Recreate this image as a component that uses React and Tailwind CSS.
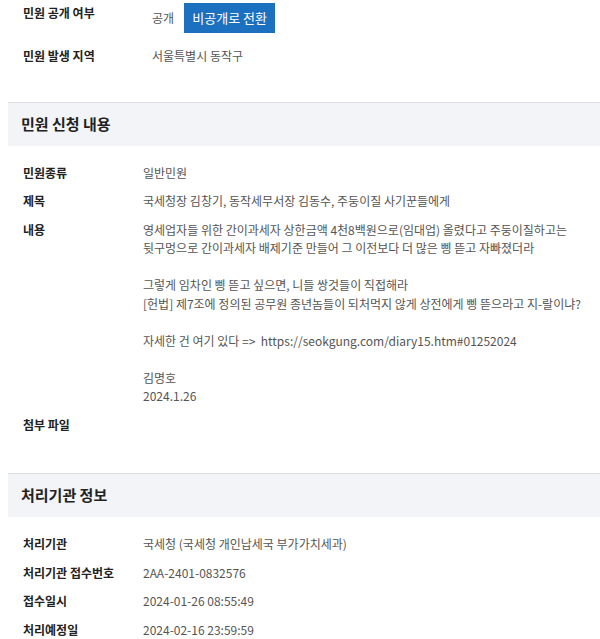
const Row = ({ label, children, className = "", labelW = "w-[120px]" }) => (
  <div className={`flex py-[5px] leading-[18.5px] ${className}`}>
    <div className={`${labelW} shrink-0 font-bold text-[#222]`}>{label}</div>
    <div className="flex-1 text-[#555]">{children}</div>
  </div>
);

const SectionHeader = ({ title }) => (
  <div className="border-t border-[#dcdee3] bg-[#f3f4f7] h-[44px] flex items-center pl-[13px]">
    <h2 className="text-[15px] font-bold text-[#222]">{title}</h2>
  </div>
);

export default function App() {
  return (
    <div
      className="bg-white min-h-[639px] text-[12px] pl-2"
      style={{ fontFamily: '"Noto Sans CJK KR", "Noto Sans", sans-serif' }}
    >
      {/* 공개 여부 / 발생 지역 */}
      <div className="pl-[15px] pt-[3px] pb-[31px]">
        <div className="flex items-start leading-[18.5px]">
          <div className="w-[129px] shrink-0 font-bold text-[#222] pt-[1px]">민원 공개 여부</div>
          <div className="flex items-center gap-[10px] text-[#555]">
            <span>공개</span>
            <button className="h-[30px] w-[91px] bg-[#1c70c0] text-white text-[13px]">비공개로 전환</button>
          </div>
        </div>
        <Row label="민원 발생 지역" labelW="w-[129px]" className="pt-[14px]">서울특별시 동작구</Row>
      </div>

      <SectionHeader title="민원 신청 내용" />
      <div className="pl-[15px] pt-[13px] pb-[34px]">
        <Row label="민원종류">일반민원</Row>
        <Row label="제목">국세청장 김창기, 동작세무서장 김동수, 주둥이질 사기꾼들에게</Row>
        <Row label="내용">
          영세업자들 위한 간이과세자 상한금액 4천8백원으로(임대업) 올렸다고 주둥이질하고는
          <br />
          뒷구멍으로 간이과세자 배제기준 만들어 그 이전보다 더 많은 삥 뜯고 자빠졌더라
          <br />
          <br />
          그렇게 임차인 삥 뜯고 싶으면, 니들 쌍것들이 직접해라
          <br />
          [헌법] 제7조에 정의된 공무원 종년놈들이 되처먹지 않게 상전에게 삥 뜯으라고 지-랄이냐?
          <br />
          <br />
          자세한 건 여기 있다 =&gt;&nbsp; https://seokgung.com/diary15.htm#01252024
          <br />
          <br />
          김명호
          <br />
          2024.1.26
        </Row>
        <Row label="첨부 파일"></Row>
      </div>

      <SectionHeader title="처리기관 정보" />
      <div className="pl-[15px] pt-[13px]">
        <Row label="처리기관">국세청 (국세청 개인납세국 부가가치세과)</Row>
        <Row label="처리기관 접수번호">2AA-2401-0832576</Row>
        <Row label="접수일시">2024-01-26 08:55:49</Row>
        <Row label="처리예정일">2024-02-16 23:59:59</Row>
      </div>
    </div>
  );
}
